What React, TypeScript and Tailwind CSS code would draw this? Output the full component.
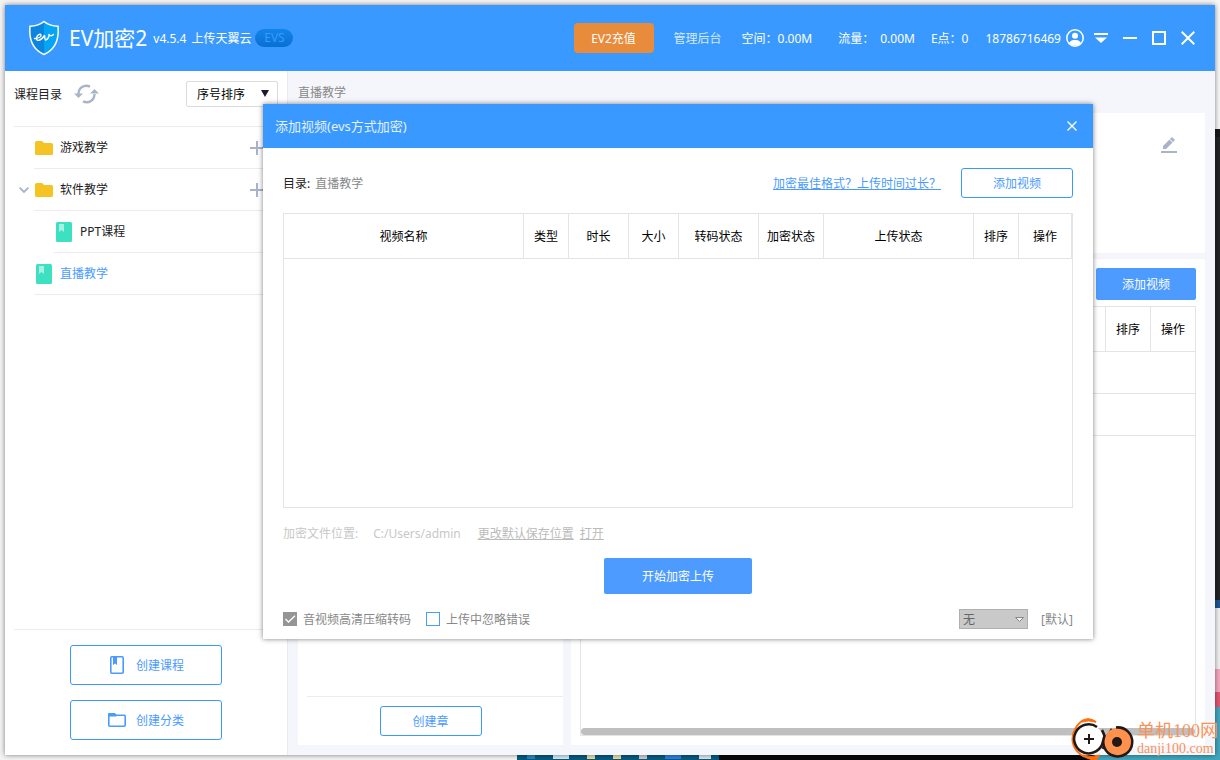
import { useState } from 'react'
import clsx from 'clsx'

const videoColumns = [
    { label: '视频名称', width: 'w-[240px]' },
    { label: '类型', width: 'w-[45px]' },
    { label: '时长', width: 'w-[60px]' },
    { label: '大小', width: 'w-[50px]' },
    { label: '转码状态', width: 'w-[80px]' },
    { label: '加密状态', width: 'w-[65px]' },
    { label: '上传状态', width: 'w-[150px]' },
    { label: '排序', width: 'w-[45px]' },
    { label: '操作', width: 'w-[53px]' },
]

const catalog = [
    { name: '游戏教学', type: 'folder', open: false, nested: false, active: false },
    { name: '软件教学', type: 'folder', open: true, nested: false, active: false },
    { name: 'PPT课程', type: 'course', open: false, nested: true, active: false },
    { name: '直播教学', type: 'course', open: false, nested: false, active: true },
]

function Logo() {
    return (
        <svg width="32" height="36" viewBox="0 0 32 36" fill="none">
            <path d="M16 1.5C12.5 4.5 7.5 6 2 6.3C1 17 2.5 28.5 16 34.5Z" fill="#0c85e0" />
            <path d="M16 1.5C19.5 4.5 24.5 6 30 6.3C31 17 29.5 28.5 16 34.5Z" fill="#05a5f5" />
            <path d="M16 1.5C19.5 4.5 24.5 6 30 6.3C31 17 29.5 28.5 16 34.5C2.5 28.5 1 17 2 6.3C7.5 6 12.5 4.5 16 1.5Z" stroke="white" strokeWidth="1.5" />
            <path d="M6.500 18.500C10.500 18.500 13.500 17 13 15C12.500 13.300 9 14.500 8.500 18C8.200 21.500 12.500 21.500 16.500 15.500C17 17 16.500 19 17.500 20C19.500 19.500 21.500 17 21 14.500C22 16.500 24 16 25.500 14.500" stroke="white" strokeWidth="1.400" strokeLinecap="round" strokeLinejoin="round" />
        </svg>
    )
}

function RefreshIcon() {
    return (
        <svg width="25" height="20" viewBox="0 0 25 20" fill="none" stroke="#aab4c8" strokeWidth="2.4">
            <path d="M16 2.6C10 0 4.5 4 4.5 10" />
            <path d="M9 17.4C15 20 20.5 16 20.5 10" />
            <path d="M0 9.5H9L4.5 14Z" fill="#aab4c8" stroke="none" />
            <path d="M16 9.5H25L20.5 5Z" fill="#aab4c8" stroke="none" />
        </svg>
    )
}

function FolderIcon() {
    return (
        <svg width="18" height="14" viewBox="0 0 18 14" fill="#f6c324">
            <path d="M1.5 0H7L9 2H16.5Q18 2 18 3.5V12.5Q18 14 16.5 14H1.5Q0 14 0 12.5V1.5Q0 0 1.5 0Z" />
        </svg>
    )
}

function CourseIcon() {
    return (
        <svg width="16" height="20" viewBox="0 0 16 20">
            <rect width="16" height="20" rx="1.5" fill="#3de0c0" />
            <path d="M3 2H8V10L5.5 8L3 10Z" fill="#a5f2e2" />
        </svg>
    )
}

function WindowControls() {
    const button = 'flex h-5 w-[14px] items-center justify-center'
    return (
        <div className="flex items-center gap-[15px] text-white">
            <button aria-label="菜单" className={button}>
                <svg width="14" height="10" viewBox="0 0 14 10" fill="currentColor">
                    <path d="M0 0H14V2H0ZM1 4.5H13L7 10Z" />
                </svg>
            </button>
            <button aria-label="最小化" className={button}>
                <svg width="14" height="2" fill="currentColor"><path d="M0 0H14V2H0Z" /></svg>
            </button>
            <button aria-label="最大化" className={button}>
                <svg width="14" height="14" fill="none" stroke="currentColor" strokeWidth="2"><path d="M1 1H13V13H1Z" /></svg>
            </button>
            <button aria-label="关闭" className={button}>
                <svg width="14" height="14" fill="none" stroke="currentColor" strokeWidth="2"><path d="M0.7 0.7L13.3 13.3M13.3 0.7L0.7 13.3" /></svg>
            </button>
        </div>
    )
}

function TitleBar() {
    return (
        <header className="flex h-[66px] shrink-0 items-center bg-[#3a99ff] pr-[20px] pl-[23px] whitespace-nowrap text-white">
            <Logo />
            <h1 className="ml-[9px] text-[21px] leading-6">EV加密2</h1>
            <span className="ml-[6px]">v4.5.4</span>
            <span className="ml-[5px]">上传天翼云</span>
            <span className="ml-1 h-[18px] w-[38px] rounded-full bg-gradient-to-b from-[#1484ea] to-[#0870d4] text-center leading-[18px] text-[#3a99ff]">
                EVS
            </span>

            <div className="ml-auto flex items-center">
                <button className="h-[30px] w-20 rounded bg-[#e88b3a]">EV2充值</button>
                <a href="#" className="ml-5 text-[#d5e9ff]">管理后台</a>
                <span className="ml-5">空间：0.00M</span>
                <span className="ml-[26px]">流量：</span>
                <span className="ml-[6px]">0.00M</span>
                <span className="ml-4">E点：0</span>
                <span className="ml-[17px]">18786716469</span>
                <svg className="mr-[10px] ml-[5px]" width="18" height="18" viewBox="0 0 18 18">
                    <circle cx="9" cy="9" r="8.2" fill="none" stroke="white" strokeWidth="1.5" />
                    <circle cx="9" cy="6.8" r="3" fill="white" />
                    <path d="M3 14C4.5 11.5 6.5 11 9 11C11.5 11 13.5 11.5 15 14C12.5 17.5 5.5 17.5 3 14Z" fill="white" />
                </svg>
                <WindowControls />
            </div>
        </header>
    )
}

function Sidebar() {
    const outline = 'flex h-10 w-[152px] items-center rounded-[3px] border border-[#3a99ff] bg-white text-[#4a9bff]'
    return (
        <aside className="flex w-[283px] shrink-0 flex-col border-r border-[#e9ebf0] bg-white px-[9px] text-[#222]">
            <div className="flex h-[55px] items-start pt-[10px]">
                <h2 className="leading-[27px]">课程目录</h2>
                <button aria-label="刷新" className="ml-3 flex h-[26px] items-center">
                    <RefreshIcon />
                </button>
                <div className="relative ml-auto">
                    <select aria-label="排序方式" className="h-[26px] w-[92px] appearance-none rounded-[2px] border border-[#dcdcdc] bg-white pl-[10px] text-black">
                        <option>序号排序</option>
                    </select>
                    <svg className="pointer-events-none absolute top-[9px] right-[9px]" width="8" height="7" fill="#1c1c28"><path d="M0 0H8L4 7Z" /></svg>
                </div>
            </div>

            <ul className="flex-1 border-t border-[#ececec]">
                {catalog.map((item) => (
                    <li key={item.name} className={clsx('flex h-[42px]', item.nested && 'pl-5')}>
                        <span className="flex w-5 items-center justify-center">
                            {item.open && (
                                <svg width="10" height="6" fill="none" stroke="#aab4c8" strokeWidth="1.8"><path d="M0.6 0.6L5 5L9.4 0.6" /></svg>
                            )}
                        </span>
                        <div className="flex flex-1 items-center border-b border-[#ececec]">
                            <span className="flex w-5 justify-center">{item.type === 'folder' ? <FolderIcon /> : <CourseIcon />}</span>
                            <a href="#" className={clsx('ml-[6px]', item.active && 'text-[#4a9bff]')}>{item.name}</a>
                            {item.type === 'folder' && (
                                <button aria-label="添加" className="mr-[14px] ml-auto">
                                    <svg width="14" height="14" fill="#aab4c8"><path d="M6 0H8V6H14V8H8V14H6V8H0V6H6Z" /></svg>
                                </button>
                            )}
                        </div>
                    </li>
                ))}
            </ul>

            <div className="flex flex-col items-center gap-[15px] border-t border-[#ececec] py-[15px]">
                <button className={outline}>
                    <svg className="ml-[38px]" width="16" height="18" viewBox="0 0 16 18" fill="none" stroke="#4a9bff" strokeWidth="1.6">
                        <rect x="1.8" y="0.8" width="12.4" height="16.4" rx="1" />
                        <path d="M4 1H8V9L6 7.5L4 9Z" fill="#4a9bff" stroke="none" />
                    </svg>
                    <span className="ml-[11px]">创建课程</span>
                </button>
                <button className={outline}>
                    <svg className="ml-[37px]" width="18" height="14" viewBox="0 0 18 14" fill="none" stroke="#4a9bff" strokeWidth="1.6">
                        <rect x="0.8" y="2.2" width="16.4" height="11" rx="1" />
                        <path d="M0 1Q0 0 1 0H7L8.5 2V3.5H0Z" fill="#4a9bff" stroke="none" />
                    </svg>
                    <span className="ml-[10px]">创建分类</span>
                </button>
            </div>
        </aside>
    )
}

function CoursePanel() {
    return (
        <main className="flex min-w-0 flex-1 flex-col px-[10px] pb-[10px]">
            <div className="h-[42px] leading-[43px] text-[#888]">直播教学</div>
            <section className="mb-[6px] flex h-[140px] items-start justify-end bg-white pt-6 pr-7">
                <button aria-label="编辑">
                    <svg width="16" height="16" viewBox="0 0 16 16" fill="#aab4c8">
                        <path d="M2 9L8.5 2.5L11.5 5.5L5 12H2ZM9 2L11 0L14 3L12 5ZM0 14H16V16H0Z" />
                    </svg>
                </button>
            </section>

            <div className="flex flex-1 gap-2">
                <section className="flex w-[265px] shrink-0 flex-col justify-end bg-white pb-[9px]">
                    <div className="ml-[9px] border-t border-[#ececec]" />
                    <button className="mx-auto mt-[9px] h-[30px] w-[102px] rounded-[3px] border border-[#3a99ff] text-[#4a9bff]">创建章</button>
                </section>

                <section className="flex min-w-0 flex-1 flex-col bg-white p-[9px]">
                    <button className="h-8 w-[100px] self-end rounded-[2px] bg-[#4d9bff] text-white">添加视频</button>
                    <div className="mt-[6px] flex flex-1 flex-col border border-[#e4e4e4]">
                        <table className="w-full table-fixed border-separate border-spacing-0 text-black">
                            <thead>
                                <tr className="h-[45px]">
                                    <td className="border-b border-[#e4e4e4]" />
                                    <th className="w-[45px] border-b border-l border-[#e4e4e4] p-0 font-normal">排序</th>
                                    <th className="w-[45px] border-b border-l border-[#e4e4e4] p-0 font-normal">操作</th>
                                </tr>
                            </thead>
                            <tbody>
                                <tr className="h-[42px]"><td colSpan={3} className="border-b border-[#e4e4e4]" /></tr>
                                <tr className="h-[42px]"><td colSpan={3} className="border-b border-[#e4e4e4]" /></tr>
                            </tbody>
                        </table>
                        <div className="mt-auto h-[7px] rounded-full bg-[#bfbfbf]" />
                    </div>
                </section>
            </div>
        </main>
    )
}

function CheckOption({ label, checked, onChange }: { label: string; checked: boolean; onChange: (value: boolean) => void }) {
    return (
        <label className="flex items-center gap-[6px]">
            <span className="relative h-[14px] w-[14px]">
                <input
                    type="checkbox"
                    checked={checked}
                    onChange={(e) => onChange(e.target.checked)}
                    className="block h-[14px] w-[14px] appearance-none border border-[#4a9bff] bg-white checked:border-[#959595] checked:bg-[#959595]"
                />
                {checked && (
                    <svg className="pointer-events-none absolute inset-0" width="14" height="14" fill="none" stroke="white" strokeWidth="1.3">
                        <path d="M2.5 7L5.5 10L12 3.8" />
                    </svg>
                )}
            </span>
            {label}
        </label>
    )
}

function AddVideoDialog() {
    const [compress, setCompress] = useState(true)
    const [ignoreErrors, setIgnoreErrors] = useState(false)

    return (
        <div role="dialog" aria-label="添加视频" className="absolute top-[99px] left-[258px] flex h-[535px] w-[830px] flex-col bg-white shadow-[0_0_5px_rgba(0,0,0,0.5)]">
            <div className="flex h-11 items-center justify-between bg-[#3a99ff] pr-4 pl-3 text-[13px] leading-4 text-[#e4f1ff]">
                <span>添加视频(evs方式加密)</span>
                <button aria-label="关闭">
                    <svg width="10" height="10" fill="none" stroke="white" strokeWidth="1.4"><path d="M0.5 0.5L9.5 9.5M9.5 0.5L0.5 9.5" /></svg>
                </button>
            </div>

            <div className="flex flex-1 flex-col px-5 pt-5 pb-[10px] text-[#888]">
                <div className="flex items-center">
                    <span className="text-[#222]">目录:</span>
                    <span className="ml-[5px]">直播教学</span>
                    <a href="#" className="ml-auto text-[#4a9bff] underline">加密最佳格式？上传时间过长？</a>
                    <button className="ml-5 h-[30px] w-28 rounded-[3px] border border-[#3a99ff] text-[#4a9bff]">添加视频</button>
                </div>

                <div className="mt-[15px] flex-1 border border-[#e4e4e4]">
                    <table className="w-full table-fixed border-separate border-spacing-0 text-black">
                        <thead>
                            <tr className="h-[45px]">
                                {videoColumns.map((column) => (
                                    <th key={column.label} className={clsx('border-r border-b border-[#e4e4e4] p-0 font-normal', column.width)}>
                                        {column.label}
                                    </th>
                                ))}
                            </tr>
                        </thead>
                    </table>
                </div>

                <div className="flex h-[50px] items-center text-[#bbb]">
                    <span className="text-[#c8c8c8]">加密文件位置:</span>
                    <span className="ml-[15px] text-[#c8c8c8]">C:/Users/admin</span>
                    <a href="#" className="ml-[17px] underline">更改默认保存位置</a>
                    <a href="#" className="ml-[6px] underline">打开</a>
                </div>

                <button className="h-9 w-[148px] self-center rounded-[2px] bg-[#4d9bff] text-white">开始加密上传</button>

                <div className="mt-[15px] flex h-5 items-center gap-[15px]">
                    <CheckOption label="音视频高清压缩转码" checked={compress} onChange={setCompress} />
                    <CheckOption label="上传中忽略错误" checked={ignoreErrors} onChange={setIgnoreErrors} />
                    <div className="ml-auto flex items-center gap-[13px]">
                        <div className="relative">
                            <select aria-label="水印" className="block h-5 w-[69px] appearance-none border border-[#b0b0b0] bg-[#c9c9c9] pl-[3px] text-[#666]">
                                <option>无</option>
                            </select>
                            <svg className="pointer-events-none absolute top-2 right-1" width="9" height="5" fill="#f4f4f4" stroke="#888"><path d="M0.5 0.5H8.5L4.5 4.5Z" /></svg>
                        </div>
                        <a href="#">[默认]</a>
                    </div>
                </div>
            </div>
        </div>
    )
}

function Watermark() {
    return (
        <div className="absolute right-[2px] bottom-0 flex items-center gap-[2px] text-[#f9935c]">
            <svg width="64" height="42" viewBox="0 0 64 42" fill="none">
                <path d="M25 4Q14 -3 6 8Q-3 22 6 33Q13 42 27 40" stroke="#ff6f0f" strokeWidth="2" />
                <path d="M11 4Q17 -2 25 4Q17 2 11 4ZM12 37Q20 40 29 37L25 42Q17 42 12 37Z" fill="#ff6f0f" stroke="#ff6f0f" />
                <circle cx="18" cy="21" r="14" fill="white" />
                <path d="M26 9A14.500 14.500 0 1 0 32 23" stroke="#231815" strokeWidth="2.5" />
                <path d="M31 12Q36 20 32 31M41 11L36 19" stroke="#231815" strokeWidth="2.5" />
                <path d="M18 16V26M13 21H23" stroke="#231815" strokeWidth="2" />
                <circle cx="47" cy="24" r="14" fill="#fe914e" />
                <path d="M45 9.5A14.5 14.5 0 1 1 34 17" stroke="#231815" strokeWidth="2.5" />
                <circle cx="46" cy="24" r="5" fill="#231815" />
            </svg>
            <div className="font-['Liberation_Serif','Noto_Sans_CJK_SC',serif]">
                <div className="text-[18px] leading-5">单机100网</div>
                <div className="text-[14px] leading-4">danji100.com</div>
            </div>
        </div>
    )
}

export default function App() {
    return (
        <div className="relative grid h-screen min-w-[1220px] grid-cols-[5px_1fr_5px] grid-rows-[5px_1fr_5px] overflow-hidden bg-[#f4f4f4] font-['Noto_Sans','Noto_Sans_CJK_SC',sans-serif] text-[12px] leading-[17px]">
            {/* Desktop visible along the right edge */}
            <div className="col-start-3 row-span-3 row-start-1 flex flex-col">
                <div className="h-[17%] bg-[#f7f7f7]" />
                <div className="h-[1%] bg-[#1a1a1c]" />
                <div className="h-[61%] bg-[#222426]" />
                <div className="h-[1%] bg-[#1f5590]" />
                <div className="h-[8%] bg-[#f0f0f0]" />
                <div className="h-[3%] bg-[#f4a6bd]" />
                <div className="h-[2%] bg-[#e25671]" />
                <div className="flex-1 bg-[#43a6bd]" />
            </div>

            {/* Desktop visible along the bottom edge */}
            <div className="col-span-2 col-start-1 row-start-3 flex">
                <div className="w-[517px]" />
                <div className="flex w-[202px] items-start gap-[18px] bg-[#085a80] pl-[10px]">
                    <span className="h-1 w-2 bg-[#2b83bd]" />
                    <span className="h-1 w-4 bg-[#d5ecf5]" />
                    <span className="h-1 w-2 bg-[#e9dfa5]" />
                    <span className="h-1 w-2 bg-[#e9dfa5]" />
                    <span className="h-1 w-2 bg-[#d0cdd0]" />
                    <span className="h-1 w-4 bg-[#2e7fe0]" />
                    <span className="h-1 w-3 bg-[#dce8ee]" />
                </div>
                <div className="flex-1 bg-[#07090c]" />
                <div className="w-[120px] bg-[#43a6bd]" />
            </div>

            <div className="relative col-start-2 row-start-2 flex min-h-0 flex-col bg-[#f5f6fb] shadow-[0_0_5px_rgba(0,0,0,0.5)]">
                <TitleBar />
                <div className="flex min-h-0 flex-1">
                    <Sidebar />
                    <CoursePanel />
                </div>
                <AddVideoDialog />
            </div>

            <Watermark />
        </div>
    )
}
